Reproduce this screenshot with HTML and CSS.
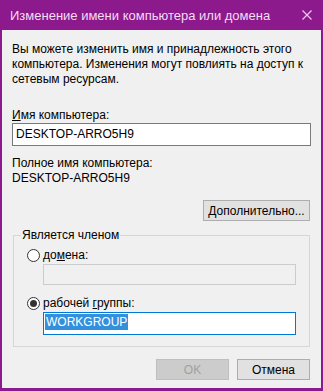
FILE: index.html
```html
<!DOCTYPE html>
<html lang="ru">
<head>
    <meta charset="UTF-8">
    <title>Изменение имени компьютера или домена</title>
    <link rel="stylesheet" href="styles.css">
</head>
<body>
    <div class="window">
        <div class="titlebar">
            <span class="title">Изменение имени компьютера или домена</span>
            <svg class="close" width="10" height="10" viewBox="0 0 10 10">
                <path d="M0.5 0.5 L9.5 9.5 M9.5 0.5 L0.5 9.5" stroke="#f2c8f2" stroke-width="1.2" fill="none"/>
            </svg>
        </div>
        <div class="content">
            <p class="intro">Вы можете изменить имя и принадлежность этого<br>компьютера. Изменения могут повлиять на доступ к<br>сетевым ресурсам.</p>

            <div class="field-label name-label"><u>И</u>мя компьютера:</div>
            <div class="textbox">DESKTOP-ARRO5H9</div>

            <div class="field-label full-label">Полное имя компьютера:</div>
            <div class="full-name">DESKTOP-ARRO5H9</div>

            <div class="more-row">
                <button class="btn more-btn"><u>Д</u>ополнительно...</button>
            </div>

            <fieldset class="member">
                <legend>Является членом</legend>
                <div class="radio-row">
                    <span class="radio"></span>
                    <span>до<u>м</u>ена:</span>
                </div>
                <div class="textbox indent disabled"></div>
                <div class="radio-row second">
                    <span class="radio checked"></span>
                    <span>рабочей <u>г</u>руппы:</span>
                </div>
                <div class="textbox indent focused"><span class="selection">WORKGROUP</span></div>
            </fieldset>

            <div class="actions">
                <button class="btn ok-btn" disabled>OK</button>
                <button class="btn">Отмена</button>
            </div>
        </div>
    </div>
</body>
</html>
```

FILE: styles.css
```css
body {
    margin: 0;
    font-family: "Liberation Sans", Arial, sans-serif;
    font-size: 12px;
    color: #000;
}
.window {
    width: 323px;
    height: 391px;
    box-sizing: border-box;
    border: 2px solid #8c1a8c;
    border-top: 0;
    border-bottom-width: 3px;
    background: #f0f0f0;
    display: flex;
    flex-direction: column;
}
.titlebar {
    height: 30px;
    flex: none;
    background: #8c1a8c;
    display: flex;
    align-items: center;
    justify-content: space-between;
    padding: 0 9px 0 8px;
}
.title {
    color: #f4dcf4;
    font-size: 13px;
}
.close {
    display: block;
}
.content {
    padding: 12px 10px 0 10px;
    line-height: 15px;
}
.intro {
    margin: 0;
}
.field-label {
    margin-top: 21px;
}
.full-label {
    margin-top: 10px;
}
.textbox {
    height: 23px;
    box-sizing: border-box;
    border: 1px solid #7a7a7a;
    background: #fff;
    padding: 3px 3px;
    line-height: 15px;
}
.textbox.indent {
    margin-left: 16px;
}
.textbox.disabled {
    height: 21px;
    border-color: #cccccc;
    background: #f0f0f0;
}
.textbox.focused {
    border-color: #0078d7;
    padding: 2px 1px;
    height: 23px;
}
.selection {
    background: #3390dc;
    color: #fff;
    padding: 1px;
}
.more-row {
    display: flex;
    justify-content: flex-end;
    margin-top: 14px;
    padding-right: 1px;
}
.btn {
    font-family: inherit;
    font-size: 12px;
    height: 21px;
    border: 1px solid #adadad;
    background: #e1e1e1;
    color: #000;
    padding: 0;
    margin: 0;
}
.more-btn {
    width: 107px;
}
.member {
    margin: 7px 1px 0 1px;
    border: 1px solid #d6d6d6;
    padding: 4px 13px 11px 13px;
}
.member legend {
    padding: 0 1px;
    margin-left: -6px;
}
.radio-row {
    display: flex;
    align-items: center;
    gap: 3px;
    height: 17px;
}
.radio-row.second {
    margin-top: 10px;
}
.radio {
    width: 13px;
    height: 13px;
    box-sizing: border-box;
    border: 1px solid #333;
    border-radius: 50%;
    background: #fff;
    position: relative;
}
.radio.checked::after {
    content: "";
    position: absolute;
    left: 2px;
    top: 2px;
    width: 7px;
    height: 7px;
    border-radius: 50%;
    background: #333;
}
.actions {
    display: flex;
    justify-content: flex-end;
    gap: 8px;
    margin-top: 12px;
    padding-right: 1px;
}
.actions .btn {
    width: 73px;
}
.ok-btn {
    background: #cccccc;
    border-color: #bfbfbf;
    color: #a0a0a0;
}
```
